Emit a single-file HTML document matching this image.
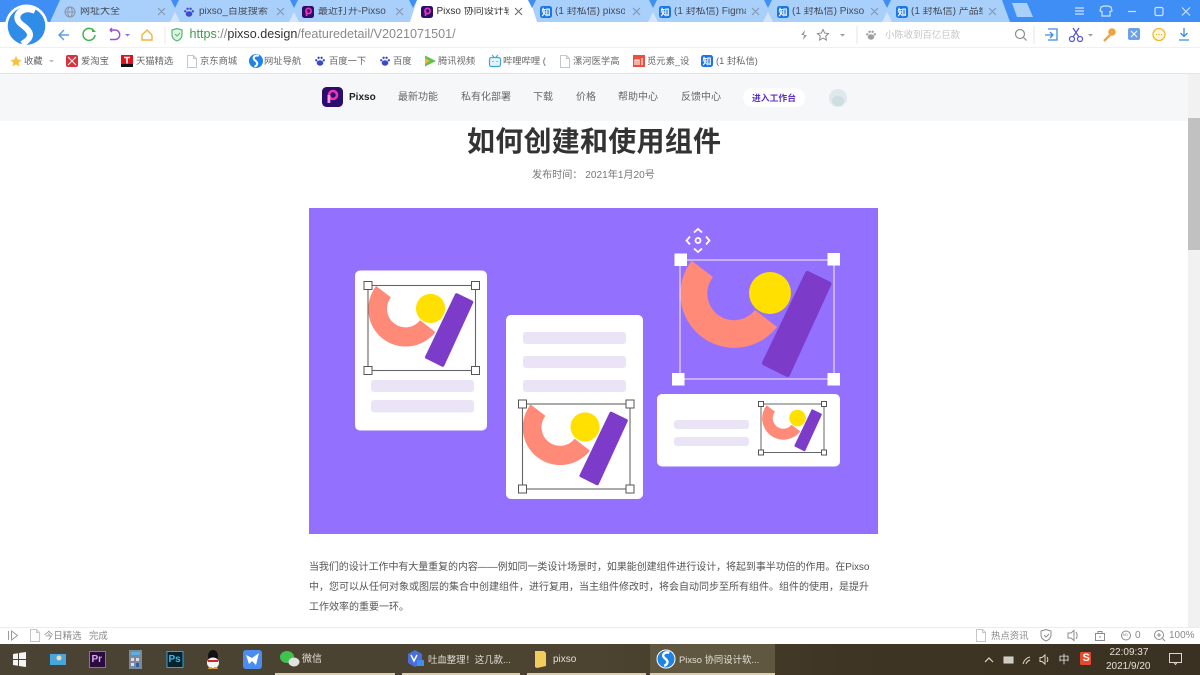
<!DOCTYPE html>
<html lang="zh"><head><meta charset="utf-8"><title>Pixso</title>
<style>
html,body{margin:0;padding:0;width:1200px;height:675px;overflow:hidden;background:#fff}
body{position:relative;font-family:"Liberation Sans","Noto Sans CJK SC",sans-serif}
.t{position:absolute;white-space:nowrap;line-height:1}
.tab{font-size:10px;color:#444a54;top:7px;overflow:hidden}
.bm{font-size:9.3px;color:#666;top:56.5px}
.nav{font-size:10px;color:#666;top:93px}
.st{font-size:9.4px;color:#888;top:630.5px}
.tb{font-size:10px;color:#e4e0d8;top:655px}
svg{position:absolute;left:0;top:0}
</style></head><body>

<svg width="1200" height="675" viewBox="0 0 1200 675">
<defs>
 <g id="art">
  <path d="M11.7 .7A54 54 0 0 0 97 67L75 50A26.600 26.600 0 0 1 33 17Z" fill="#ff8a78"/>
  <circle cx="90" cy="33" r="21" fill="#ffe000"/>
  <path d="M127.500 13.500 149 24 107.500 114.500 84.500 103Z" fill="#7d3bc9" stroke="#7d3bc9" stroke-width="5" stroke-linejoin="round"/>
 </g>
 <g id="zh"><rect width="12" height="12" rx="2.500" fill="#1a76e8"/><text x="6" y="9.500" font-size="9" font-weight="bold" fill="#fff" text-anchor="middle" font-family="Noto Sans CJK SC,sans-serif">知</text></g>
 <g id="pp"><rect width="12" height="12" rx="2.500" fill="#2a0e6e"/><circle cx="6.500" cy="5" r="2.600" fill="none" stroke="#f032b4" stroke-width="1.700"/><rect x="3.700" y="5" width="1.700" height="5" fill="#f032b4"/></g>
 <g id="paw" fill="#3d49c8"><ellipse cx="6" cy="8" rx="3.300" ry="2.700"/><circle cx="2.300" cy="5.300" r="1.200"/><circle cx="4.600" cy="2.800" r="1.200"/><circle cx="7.600" cy="2.800" r="1.200"/><circle cx="9.800" cy="5.300" r="1.200"/></g>
 <g id="doc"><path d="M.5 .5H6.500L9.500 3.500V12.500H.5Z" fill="#fff" stroke="#c6c6c6"/><path d="M6.500 .5V3.500H9.500" fill="none" stroke="#c6c6c6"/></g>
 <g id="sm"><circle r="7" fill="#1e83e6"/><path d="M2.800-5.200C-1.500-6.500-4-3-1.200-.8 1.500 1.300 2.800 3.500-1.500 5.800" stroke="#fff" stroke-width="2" fill="none"/></g>
</defs>

<!-- tab strip -->
<rect width="1200" height="22" fill="#3f8ef6"/>
<polygon points="60,0 1002,0 1010,22 50,22" fill="#a9cffb"/>
<g fill="#3f8ef6">
 <polygon points="171,0 179,0 175,8"/><polygon points="290,0 298,0 294,8"/><polygon points="649,0 657,0 653,8"/><polygon points="764,0 772,0 768,8"/><polygon points="883,0 891,0 887,8"/>
</g>
<g fill="#d2e5fc">
 <polygon points="175,12 170,22 180,22"/><polygon points="294,12 289,22 299,22"/><polygon points="653,12 648,22 658,22"/><polygon points="768,12 763,22 773,22"/><polygon points="887,12 882,22 892,22"/>
</g>
<polygon points="417,0 530,0 537,22 410,22" fill="#fff"/>
<polygon points="409,0 417,0 413,8" fill="#3f8ef6"/><polygon points="528,0 536,0 532,8" fill="#3f8ef6"/>
<polygon points="1012,3 1027,3 1033,17 1017,17" fill="#a9cffb"/>

<!-- tab icons -->
<g fill="none" stroke="#8a93a0"><circle cx="70" cy="12" r="5"/><ellipse cx="70" cy="12" rx="2.200" ry="5"/><path d="M65 12h10"/></g>
<use href="#paw" x="183" y="6"/>
<use href="#pp" x="302" y="6"/>
<use href="#pp" x="421" y="6"/>
<use href="#zh" x="540" y="6"/><use href="#zh" x="659" y="6"/><use href="#zh" x="777" y="6"/><use href="#zh" x="896" y="6"/>
<g stroke="#7f93ab" stroke-width="1" fill="none">
 <path d="M158 8l7 7M165 8l-7 7M277 8l7 7M284 8l-7 7M396 8l7 7M403 8l-7 7M633 8l7 7M640 8l-7 7M752 8l7 7M759 8l-7 7M871 8l7 7M878 8l-7 7M989 8l7 7M996 8l-7 7"/>
 <path d="M515 8l7 7M522 8l-7 7" stroke="#666"/>
</g>

<!-- window controls -->
<g stroke="#cfe3fd" stroke-width="1.200" fill="none">
 <path d="M1075 8h9M1075 11h9M1075 14h9"/>
 <path d="M1101 7l3-1h4l3 1 1 4-2 .5V16h-8v-4.500l-2-.5Z"/>
 <path d="M1128 11.500h8"/>
 <rect x="1155" y="7.500" width="8" height="8" rx="1.500"/>
 <path d="M1182 7.500l8 8M1190 7.500l-8 8"/>
</g>

<!-- toolbar -->
<rect y="22" width="1200" height="25" fill="#fff"/>

<!-- logo -->
<circle cx="26.500" cy="26" r="21.500" fill="#fff"/>
<circle cx="26.500" cy="26" r="18.800" fill="#2f8de8"/>
<path d="M35 11C23 5 11 16 21 24 29 30 36 36 22 44" stroke="#fff" stroke-width="6" fill="none"/>

<path d="M69 35H59M64 30l-5 5 5 5" stroke="#5d9be8" stroke-width="1.400" fill="none"/>
<path d="M94 31a6 6 0 1 0 1 4" stroke="#3fb34a" stroke-width="1.500" fill="none"/><path d="M92 28v4h4z" fill="#3fb34a"/>
<path d="M110 30h5a4.500 4.500 0 0 1 0 9.500h-5M110 30l2-2M110 30l2 2" stroke="#9b4fd6" stroke-width="1.400" fill="none"/>
<path d="M125 34h5l-2.500 2.500z" fill="#9a6fd0"/>
<path d="M142 35l5-5 5 5v5h-10z" stroke="#eeb340" stroke-width="1.400" fill="none"/>
<rect x="164.500" y="27" width="1" height="17" fill="#e8e8e8"/>
<path d="M172 30l5-1.500 5 1.500v5c0 3-2.500 5-5 6-2.500-1-5-3-5-6z" fill="#dff3e2" stroke="#57b874" stroke-width="1.200"/>
<path d="M175 34l2 2 3-3" stroke="#57b874" fill="none"/>
<path d="M805 30l-4 5h3l-1 5 4-5h-3z" fill="#9a9a9a"/>
<path d="M823 29.500l1.700 3.600 3.800.5-2.800 2.600.7 3.800-3.400-1.900-3.400 1.900.7-3.800-2.800-2.600 3.800-.5z" stroke="#8a8a8a" fill="none"/>
<path d="M840 34h5l-2.500 2.500z" fill="#999"/>
<rect x="856.500" y="26" width="1" height="18" fill="#e6e6e6"/>
<g transform="translate(865,29)" opacity=".55"><use href="#paw" style="filter:grayscale(1)"/></g>
<circle cx="1020" cy="34" r="4.500" stroke="#8d8d8d" stroke-width="1.200" fill="none"/><path d="M1023.500 37.500l3 3" stroke="#8d8d8d" stroke-width="1.200"/>
<rect x="1033.500" y="26" width="1" height="18" fill="#e6e6e6"/>
<path d="M1048 29h9v11h-9M1045 35h7M1050 32l3 3-3 3" stroke="#3f8ae0" stroke-width="1.300" fill="none"/>
<g stroke="#5a57d8" stroke-width="1.300" fill="none"><circle cx="1072" cy="39" r="2.500"/><circle cx="1080" cy="39" r="2.500"/><path d="M1073 37l6-9M1079 37l-6-9"/></g>
<path d="M1088 34h5l-2.500 2.500z" fill="#999"/>
<circle cx="1112" cy="32" r="3.800" fill="#f0a340"/><path d="M1110 35l-6 6" stroke="#f0a340" stroke-width="2.400"/>
<rect x="1128" y="28" width="12" height="12" rx="2" fill="#6da2e8"/><path d="M1131 31l6 6M1137 31l-6 6" stroke="#fff"/>
<circle cx="1159" cy="34.500" r="6" fill="#fff6d8" stroke="#f2b632" stroke-width="1.300"/><path d="M1156 34.500h1M1158.500 34.500h1M1161 34.500h1" stroke="#e0a020"/>
<path d="M1184 28v8M1180.500 33l3.500 3.500 3.500-3.500M1179 40h10" stroke="#3f8ae0" stroke-width="1.300" fill="none"/>
<rect y="47" width="1200" height="1" fill="#f0f0f0"/>

<!-- bookmarks -->
<path d="M16 56l1.700 3.500 3.800.5-2.800 2.600.7 3.800-3.400-1.900-3.400 1.900.7-3.800-2.800-2.600 3.800-.5z" fill="#f7c23c"/>
<path d="M49 60h5l-2.500 2.500z" fill="#bbb"/>
<rect x="66" y="55" width="12" height="12" rx="2" fill="#d9323f"/><path d="M68 57l8 8M76 57l-8 8" stroke="#fff"/>
<rect x="121" y="55" width="12" height="12" fill="#e0111c"/><rect x="121" y="64" width="12" height="3" fill="#111"/><path d="M124 57.500h6M127 57.500v6" stroke="#fff" stroke-width="1.600"/>
<use href="#doc" x="187" y="55"/>
<use href="#sm" x="256" y="61"/>
<use href="#paw" x="314" y="55"/>
<use href="#paw" x="379" y="55"/>
<path d="M425 55.500l11 5.500-11 5.500z" fill="#5fc24f"/><path d="M425 58v6l5-3z" fill="#f5b52e"/>
<rect x="489.500" y="57.500" width="11" height="9" rx="2" fill="#e3f4fb" stroke="#3ba9d8" stroke-width="1.200"/><path d="M492 55l2 2M498 55l-2 2" stroke="#3ba9d8"/><path d="M493 61v1M497 61v1" stroke="#3ba9d8" stroke-width="1.200"/>
<use href="#doc" x="560" y="55"/>
<rect x="633" y="55" width="12" height="12" fill="#e8503f"/><path d="M635 65v-5h4v5M637 60v5M642 58v7" stroke="#fff" stroke-width="1.100" fill="none"/>
<use href="#zh" x="701" y="55"/>
<rect y="73" width="1200" height="1" fill="#e4e4e4"/>

<!-- page nav -->
<rect y="74" width="1188" height="47" fill="#f6f7f8"/>
<rect x="322" y="87" width="21" height="20" rx="4.500" fill="#2a0e6e"/>
<circle cx="333" cy="95" r="4" fill="none" stroke="#f032b4" stroke-width="2.600"/><rect x="327.500" y="95" width="2.800" height="8" fill="#f29ad8"/>
<rect x="743" y="88" width="62" height="19" rx="9.500" fill="#fff"/>
<circle cx="838" cy="98" r="9" fill="#dfe8ec"/><ellipse cx="838" cy="101" rx="6" ry="5" fill="#cfdde3"/>

<!-- scrollbar -->
<rect x="1188" y="74" width="12" height="553" fill="#f1f1f1"/>
<rect x="1188" y="118" width="12" height="132" fill="#c1c1c1"/>

<!-- illustration -->
<rect x="309" y="208" width="569" height="326" fill="#9470ff"/>
<rect x="355" y="270.500" width="132" height="160" rx="5" fill="#fff"/>
<rect x="506" y="315" width="137" height="184" rx="5" fill="#fff"/>
<rect x="657" y="394" width="183" height="72.500" rx="5" fill="#fff"/>
<g fill="#eae4f6">
 <rect x="371" y="380" width="103" height="12" rx="3"/><rect x="371" y="400" width="103" height="12.500" rx="3"/>
 <rect x="523" y="332" width="103" height="12" rx="3"/><rect x="523" y="356" width="103" height="12" rx="3"/><rect x="523" y="380" width="103" height="12" rx="3"/>
 <rect x="674" y="420" width="75" height="9" rx="3"/><rect x="674" y="437" width="75" height="9" rx="3"/>
</g>
<use href="#art" x="680" y="260"/>
<rect x="680" y="260" width="154" height="119" fill="none" stroke="#e6dcff" stroke-width="1.200"/>
<g fill="#fff"><rect x="674.500" y="253.500" width="12.500" height="12.500"/><rect x="827.500" y="253" width="12.500" height="12.500"/><rect x="672" y="373" width="12.500" height="12.500"/><rect x="827.500" y="373" width="12.500" height="12.500"/></g>
<g fill="none" stroke="#fff" stroke-width="1.800"><circle cx="698" cy="240.500" r="2.500"/><path d="M694 232.500l4-3.500 4 3.500M694 248.500l4 3.500 4-3.500M690 236.500l-3.500 4 3.500 4M706 236.500l3.500 4-3.500 4"/></g>

<g transform="translate(368,285.500) scale(.695)"><use href="#art"/></g>
<rect x="368" y="285.500" width="107.500" height="85" fill="none" stroke="#666" stroke-width="1.100"/>
<g fill="#fff" stroke="#555"><rect x="364" y="281.500" width="8" height="8"/><rect x="471.500" y="281.500" width="8" height="8"/><rect x="364" y="366.500" width="8" height="8"/><rect x="471.500" y="366.500" width="8" height="8"/></g>

<g transform="translate(522.500,404) scale(.695)"><use href="#art"/></g>
<rect x="522.500" y="404" width="107.500" height="85" fill="none" stroke="#666" stroke-width="1.100"/>
<g fill="#fff" stroke="#555"><rect x="518.500" y="400" width="8" height="8"/><rect x="626" y="400" width="8" height="8"/><rect x="518.500" y="485" width="8" height="8"/><rect x="626" y="485" width="8" height="8"/></g>

<g transform="translate(762,405) scale(.395)"><use href="#art"/></g>
<rect x="761" y="404" width="63" height="48.500" fill="none" stroke="#666" stroke-width="1"/>
<g fill="#fff" stroke="#555"><rect x="758.500" y="401.500" width="5" height="5"/><rect x="821.500" y="401.500" width="5" height="5"/><rect x="758.500" y="450" width="5" height="5"/><rect x="821.500" y="450" width="5" height="5"/></g>

<!-- status bar -->
<rect y="627" width="1200" height="17" fill="#fff"/>
<rect y="627" width="1200" height="1" fill="#ececec"/>
<path d="M8.500 631v9M11.500 631l6 4.500-6 4.500z" stroke="#999" fill="none"/>
<use href="#doc" x="30" y="629"/>
<use href="#doc" x="976" y="629"/>
<g stroke="#8c8c8c" fill="none">
 <path d="M1041 631l5-1.500 5 1.500v4c0 3-2.500 5-5 6-2.500-1-5-3-5-6zM1044 635l2 2 3-3"/>
 <path d="M1068 633h3l3-2.500v10l-3-2.500h-3zM1076 632c1.500 2 1.500 5 0 7"/>
 <rect x="1095.500" y="633.500" width="9" height="7"/><path d="M1098 633.500v-2h4v2M1100 636v2"/>
 <circle cx="1126" cy="635.500" r="4.500"/>
 <circle cx="1159" cy="635" r="4.500"/><path d="M1162.500 638.500l2.500 2.500M1157 635h4M1159 633v4"/>
</g>

<!-- taskbar -->
<defs><linearGradient id="tbg" x1="0" x2="1" y1="0" y2="0"><stop offset="0" stop-color="#4a4334"/><stop offset=".5" stop-color="#4c4330"/><stop offset=".7" stop-color="#3f3524"/><stop offset="1" stop-color="#3a3122"/></linearGradient></defs>
<rect y="644" width="1200" height="31" fill="url(#tbg)"/>
<rect x="650" y="644" width="125" height="31" fill="#5f5740"/>
<g fill="#d8ceb0"><rect x="275" y="673" width="120" height="2"/><rect x="402" y="673" width="118" height="2"/><rect x="527" y="673" width="119" height="2"/><rect x="650" y="673" width="125" height="2"/></g>
<path d="M13 654l5-.8V659h-5zM19 653l7-1v7h-7zM13 660h5v5.800l-5-.8zM19 660h7v7l-7-1z" fill="#f4f4f4"/>
<rect x="50" y="654" width="16" height="11" fill="#45a7dd"/><circle cx="59" cy="658" r="2.500" fill="#f3d9b0"/>
<rect x="89.500" y="651.500" width="16" height="16" fill="#2a0a3f" stroke="#9a5fd0"/>
<rect x="129" y="650" width="13" height="19" fill="#7b8a9a"/><rect x="131" y="652" width="9" height="3" fill="#5ab0e0"/><path d="M131 658h3v3h-3zM136 658h3v3h-3zM131 663h3v3h-3z" fill="#dde"/><rect x="136" y="663" width="3" height="4" fill="#2f5fa8"/>
<rect x="167" y="651.500" width="16" height="16" fill="#04232f" stroke="#2da3d8"/>
<ellipse cx="213" cy="656" rx="5" ry="6" fill="#111"/><ellipse cx="213" cy="663" rx="6" ry="5.500" fill="#f4f4f4"/><path d="M208 660h10v2h-10z" fill="#d8232a"/><path d="M209 667h3v2h-4zM214 667h3l1 2h-4z" fill="#f0a020"/>
<rect x="243" y="650" width="19" height="19" rx="3" fill="#4a8cf0"/><path d="M246 655l6 3 7-5-3 12-4-4-3 3z" fill="#fff"/>
<ellipse cx="287" cy="657" rx="7" ry="6" fill="#3fc24e"/><ellipse cx="294" cy="662" rx="5.500" ry="4.500" fill="#e2e2e2"/>
<path d="M415 650l7 4v9l-7 4-7-4v-9z" fill="#4a6fd8"/><rect x="417" y="660" width="7" height="6" fill="#3f8ef0"/><path d="M411 655l3 6 3-6" stroke="#fff" stroke-width="1.500" fill="none"/>
<path d="M535 651h9l2 2v13l-9 2-2-1z" fill="#f3cd5c"/>
<use href="#sm" transform="translate(666,659) scale(1.200)"/>
<circle cx="666" cy="659" r="9" fill="none" stroke="#fff" stroke-width="1"/>
<g stroke="#dcd8cf" fill="none">
 <path d="M985 662l4-4 4 4" stroke-width="1.200"/>
 <rect x="1004" y="657" width="9" height="6" fill="#cfcac0"/>
 <path d="M1023 664c1-4 3-6 7-7M1026 664c.5-2 1.500-3 4-4" />
 <path d="M1040 657.500h2l3-2.500v9l-3-2.500h-2zM1047 657c1 1.500 1 3.500 0 5"/>
 <rect x="1169.500" y="653.500" width="12" height="9"/><path d="M1174 662.500l1.500 2 1.500-2"/>
</g>
<rect x="1080" y="652" width="11" height="13" rx="1.500" fill="#e8492c"/>
</svg>

<!-- tab labels -->
<div class="t tab" style="left:80px;width:48px">网址大全</div>
<div class="t tab" style="left:199px;width:70px">pixso_百度搜索</div>
<div class="t tab" style="left:318px;width:70px">最近打开-Pixso</div>
<div class="t tab" style="left:436.500px;width:72px;color:#333">Pixso 协同设计软</div>
<div class="t tab" style="left:555px;width:70px">(1 封私信) pixso</div>
<div class="t tab" style="left:674px;width:72px">(1 封私信) Figma</div>
<div class="t tab" style="left:792px;width:72px">(1 封私信) Pixso</div>
<div class="t tab" style="left:911px;width:72px">(1 封私信) 产品经</div>

<!-- url -->
<div class="t" style="left:189.500px;top:27.500px;font-size:12.600px;color:#8a8a8a"><span style="color:#3f9a4f">https</span>://<span style="color:#333">pixso.design</span>/featuredetail/V2021071501/</div>
<div class="t" style="left:885px;top:30px;font-size:9.400px;color:#c4c4c4">小陈收到百亿巨款</div>

<!-- bookmarks -->
<div class="t bm" style="left:24px">收藏</div>
<div class="t bm" style="left:81px">爱淘宝</div>
<div class="t bm" style="left:136px">天猫精选</div>
<div class="t bm" style="left:200px">京东商城</div>
<div class="t bm" style="left:264px">网址导航</div>
<div class="t bm" style="left:329px">百度一下</div>
<div class="t bm" style="left:393px">百度</div>
<div class="t bm" style="left:438px">腾讯视频</div>
<div class="t bm" style="left:503px">哔哩哔哩 (</div>
<div class="t bm" style="left:573px">漯河医学高</div>
<div class="t bm" style="left:647px">觅元素_设</div>
<div class="t bm" style="left:716px">(1 封私信)</div>

<!-- nav -->
<div class="t" style="left:349px;top:93px;font-size:10px;font-weight:bold;color:#222">Pixso</div>
<div class="t nav" style="left:398px">最新功能</div>
<div class="t nav" style="left:461px">私有化部署</div>
<div class="t nav" style="left:533px">下载</div>
<div class="t nav" style="left:576px">价格</div>
<div class="t nav" style="left:618px">帮助中心</div>
<div class="t nav" style="left:681px">反馈中心</div>
<div class="t" style="left:752px;top:93.500px;font-size:8.800px;font-weight:bold;color:#5a2fc0">进入工作台</div>

<!-- article -->
<div class="t" style="left:467px;top:128px;font-size:28px;letter-spacing:.25px;font-weight:bold;color:#333">如何创建和使用组件</div>
<div class="t" style="left:532px;top:171px;font-size:10.100px;color:#777">发布时间： 2021年1月20号</div>
<div class="t" style="left:309px;top:563px;font-size:10px;letter-spacing:-.07px;color:#555">当我们的设计工作中有大量重复的内容——例如同一类设计场景时，如果能创建组件进行设计，将起到事半功倍的作用。在Pixso</div>
<div class="t" style="left:309px;top:583px;font-size:10px;color:#555">中，您可以从任何对象或图层的集合中创建组件，进行复用，当主组件修改时，将会自动同步至所有组件。组件的使用，是提升</div>
<div class="t" style="left:309px;top:603px;font-size:10px;color:#555">工作效率的重要一环。</div>

<!-- status -->
<div class="t st" style="left:44px">今日精选</div>
<div class="t st" style="left:89px">完成</div>
<div class="t st" style="left:991px">热点资讯</div>
<div class="t st" style="left:1135px;font-size:10px">0</div>
<div class="t st" style="left:1169px;font-size:10px">100%</div>
<div class="t" style="left:1122.500px;top:633px;font-size:4px;color:#888">AD</div>

<!-- taskbar text -->
<div class="t" style="left:168.500px;top:654.500px;font-size:10px;font-weight:bold;color:#3fb8e8">Ps</div>
<div class="t" style="left:91.500px;top:654.500px;font-size:10px;font-weight:bold;color:#d9a8f0">Pr</div>
<div class="t tb" style="left:302px">微信</div>
<div class="t tb" style="left:428px;font-size:9.400px">吐血整理！这几款...</div>
<div class="t tb" style="left:553px">pixso</div>
<div class="t tb" style="left:679px;font-size:9.400px">Pixso 协同设计软...</div>
<div class="t tb" style="left:1058.500px;font-size:11px">中</div>
<div class="t" style="left:1082.500px;top:653px;font-size:11px;font-weight:bold;color:#fff">S</div>
<div class="t tb" style="left:1109.500px;top:647.500px">22:09:37</div>
<div class="t tb" style="left:1106px;top:662px">2021/9/20</div>
</body></html>
